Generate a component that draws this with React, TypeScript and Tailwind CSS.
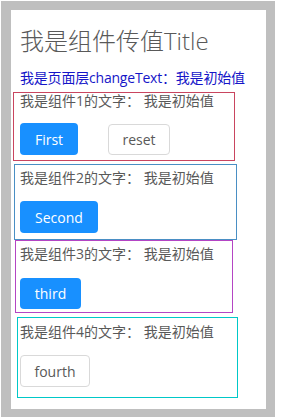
import React from 'react';

const font = { fontFamily: '"Open Sans", "Noto Sans CJK SC", sans-serif' };

type BoxProps = {
  idx: number;
  box: string;
  text: string;
  btn: string;
  children: React.ReactNode;
};

const Child = ({ idx, box, text, btn, children }: BoxProps) => (
  <div className={`border border-solid ${box}`}>
    <p className={`text-[14px] leading-[16px] text-[#595959] whitespace-nowrap ${text}`}>
      我是组件{idx}的文字： 我是初始值
    </p>
    <div className={`flex items-start ${btn}`}>{children}</div>
  </div>
);

const primary = 'flex items-center justify-center rounded-[4px] bg-[#1890ff] text-white text-[14px]';
const plain = 'flex items-center justify-center rounded-[4px] border border-[#d9d9d9] bg-white text-[#595959] text-[14px]';

export default function App() {
  return (
    <div className="w-[289px] h-[417px] bg-white" style={font}>
      <div className="ml-px mt-px w-[274px] h-[416px] border-[#bfbfbf] border-t-[9px] border-b-[8px] border-l-[10px] border-r-[9px] bg-white">
        <h1 className="mt-[15px] pl-[9px] text-[24px] leading-[32px] font-light text-[#595959] whitespace-nowrap">
          我是组件传值Title
        </h1>
        <p className="mt-[11px] pl-[9px] text-[14px] leading-[20px] tracking-[-0.2px] text-[#1515c8] whitespace-nowrap">
          我是页面层changeText：我是初始值
        </p>

        <div className="mt-[4px] ml-[2px] w-[222px]">
          <Child idx={1} box="h-[69px] border-[#c9455f] pl-[6px]" text="pt-0" btn="mt-[14px] gap-[30px]">
            <button className={`${primary} w-[58px] h-[32px]`}>First</button>
            <button className={`${plain} w-[62px] h-[31px] mt-px`}>reset</button>
          </Child>
        </div>

        <div className="mt-[3px] ml-[3px] w-[223px]">
          <Child idx={2} box="h-[76px] border-[#4a8fc4] pl-[5px]" text="pt-[5px]" btn="mt-[15px]">
            <button className={`${primary} w-[78px] h-[32px]`}>Second</button>
          </Child>
        </div>

        <div className="ml-[4px] w-[218px]">
          <Child idx={3} box="h-[73px] border-[#b445c4] pl-[4px]" text="pt-[5px]" btn="mt-[16px]">
            <button className={`${primary} w-[61px] h-[31px]`}>third</button>
          </Child>
        </div>

        <div className="mt-[4px] ml-[6px] w-[221px]">
          <Child idx={4} box="h-[81px] border-[#00c8c8] pl-[2px]" text="pt-[6px]" btn="mt-[15px]">
            <button className={`${plain} w-[70px] h-[32px]`}>fourth</button>
          </Child>
        </div>
      </div>
    </div>
  );
}
